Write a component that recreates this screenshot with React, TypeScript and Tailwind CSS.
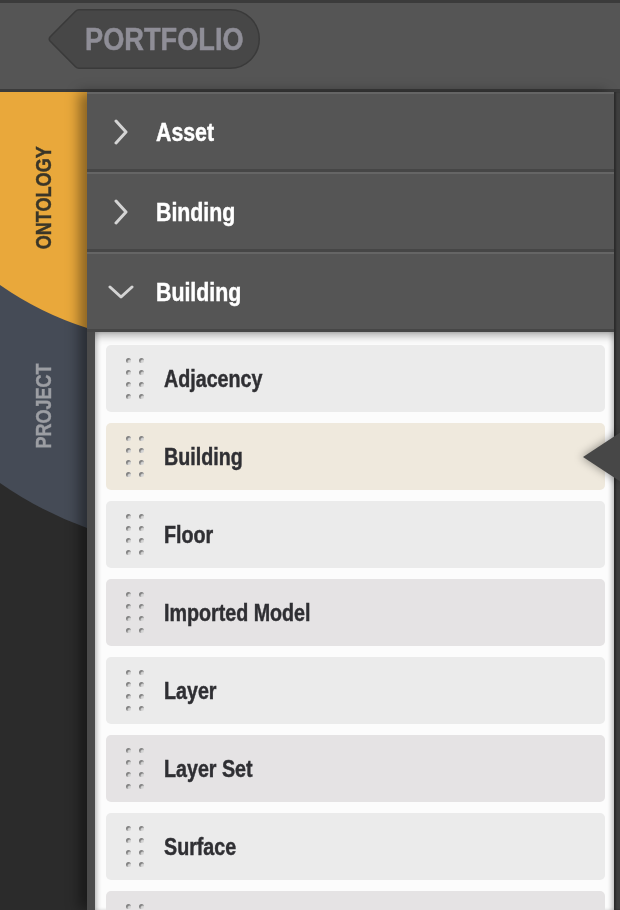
import React from 'react'

const sans = "font-['Liberation_Sans',Arial,sans-serif]"
// condensed look: Arial metrics squeezed to roughly Arial Narrow widths
const squeeze = 'inline-block origin-left scale-x-[0.82] [-webkit-text-stroke:0.45px_currentColor]'

const sections = [
    { name: 'Asset', open: false },
    { name: 'Binding', open: false },
    { name: 'Building', open: true },
]

const items = ['Adjacency', 'Building', 'Floor', 'Imported Model', 'Layer', 'Layer Set', 'Surface', '']

function Chevron({ open }: { open: boolean }) {
    if (open) {
        return (
            <svg width="26" height="14" viewBox="0 0 26 14" fill="none">
                <polyline points="2,2 13,12 24,2" stroke="#d4d4d4" strokeWidth="3" strokeLinecap="round" strokeLinejoin="round" />
            </svg>
        )
    }
    return (
        <svg width="14" height="26" viewBox="0 0 14 26" fill="none">
            <polyline points="2,2 12,13 2,24" stroke="#d4d4d4" strokeWidth="3" strokeLinecap="round" strokeLinejoin="round" />
        </svg>
    )
}

function Grip() {
    return (
        <div className="grid grid-cols-2 gap-x-[8px] gap-y-[6.7px] w-[18px] shrink-0">
            {Array.from({ length: 8 }).map((_, i) => (
                <div
                    key={i}
                    className="w-[5px] h-[5px] rounded-full bg-[#d6d6d6] shadow-[inset_1.5px_1.5px_1px_rgba(0,0,0,0.4)]"
                />
            ))}
        </div>
    )
}

export default function App() {
    return (
        <div className={`w-[620px] h-[910px] overflow-hidden flex flex-col bg-[#2b2b2b] ${sans}`}>
            {/* Top bar */}
            <div className="h-[92px] shrink-0 bg-[#555555] border-t-[3px] border-b-[3px] border-[#3b3b3b] pl-[48px] pt-[6px]">
                <div className="relative w-[212px] h-[60px] flex items-center pl-[37px]">
                    <svg className="absolute inset-0" width="212" height="60" viewBox="0 0 212 60">
                        <path
                            d="M31 0.75 H182 A29.25 29.25 0 0 1 182 59.25 H31 Q29 59.25 27.5 57.8 L2 32 Q0.5 30 2 28 L27.5 2.2 Q29 0.75 31 0.75 Z"
                            fill="#474747"
                            stroke="#3a3a3a"
                            strokeWidth="1.5"
                        />
                    </svg>
                    <span className="relative inline-block origin-left scale-x-[0.85] [-webkit-text-stroke:0.5px_currentColor] text-[32px] leading-none font-bold text-[#8f8e97]">
                        PORTFOLIO
                    </span>
                </div>
            </div>

            <div className="flex flex-1 min-h-0">
                {/* Side tabs */}
                <div className="w-[87px] shrink-0 flex flex-col">
                    <div className="h-[193px] bg-[#e9a83b] flex justify-center pt-[43px]">
                        <span className="[writing-mode:vertical-rl] rotate-180 scale-y-[0.82] [-webkit-text-stroke:0.4px_currentColor] text-[22px] leading-none font-bold text-[#3a3628] h-fit">
                            ONTOLOGY
                        </span>
                    </div>
                    <svg width="87" height="45" viewBox="0 0 87 45" className="block shrink-0">
                        <rect width="87" height="45" fill="#454b56" />
                        <path d="M0 0 Q40 28 87 43 V0 Z" fill="#e9a83b" />
                    </svg>
                    <div className="h-[153px] bg-[#454b56] flex justify-center pt-[24px]">
                        <span className="[writing-mode:vertical-rl] rotate-180 scale-y-[0.82] [-webkit-text-stroke:0.4px_currentColor] text-[22px] leading-none font-bold text-[#9c9ea3] h-fit">
                            PROJECT
                        </span>
                    </div>
                    <svg width="87" height="45" viewBox="0 0 87 45" className="block shrink-0">
                        <rect width="87" height="45" fill="#2b2b2b" />
                        <path d="M0 0 Q40 28 87 45 V0 Z" fill="#454b56" />
                    </svg>
                    <div className="flex-1 bg-[#2b2b2b]" />
                </div>

                {/* Accordion */}
                <div className="relative z-10 flex-1 flex flex-col shadow-[-8px_0_12px_rgba(0,0,0,0.4)]">
                    {sections.map((s) => (
                        <div
                            key={s.name}
                            className="h-[80px] shrink-0 flex items-center bg-[#555555] border-t-2 border-[#656565] border-b-[3px] border-b-[#464646] pl-[21px]"
                        >
                            <div className="w-[26px] flex justify-center">
                                <Chevron open={s.open} />
                            </div>
                            <span className={`ml-[22px] text-[26px] font-bold text-white leading-none ${squeeze}`}>{s.name}</span>
                        </div>
                    ))}

                    <div className="flex flex-1 min-h-0">
                        <div className="w-[8px] bg-[#4b4b4b]" />
                        <div className="flex-1 bg-[#fcfcfc] shadow-[inset_0_7px_8px_-3px_rgba(0,0,0,0.3),inset_4px_0_5px_-2px_rgba(0,0,0,0.2),inset_-4px_0_5px_-2px_rgba(0,0,0,0.2)] pt-[13px] pl-[11px] pr-[9px] flex flex-col gap-[11px]">
                            {items.map((item, i) => {
                                const selected = item === 'Building'
                                const bg = selected ? 'bg-[#efe9dd]' : i % 2 === 1 ? 'bg-[#e5e3e4]' : 'bg-[#ebebeb]'
                                return (
                                    <div
                                        key={i}
                                        className={`relative h-[67px] shrink-0 rounded-[5px] flex items-center pl-[20px] ${bg}`}
                                    >
                                        <Grip />
                                        {item && (
                                            <span className={`ml-[20px] text-[24px] font-bold text-[#2f2f33] leading-none ${squeeze}`}>{item}</span>
                                        )}
                                        {selected && (
                                            <svg
                                                className="absolute right-[-16px] top-[9px] drop-shadow-[-2px_0_4px_rgba(0,0,0,0.35)]"
                                                width="38"
                                                height="50"
                                                viewBox="0 0 38 50"
                                            >
                                                <polygon points="0,25 38,0 38,50" fill="#474747" />
                                            </svg>
                                        )}
                                    </div>
                                )
                            })}
                        </div>
                    </div>
                </div>

                <div className="w-[6px] shrink-0 bg-[#3f3f3f] shadow-[inset_2px_0_2px_rgba(0,0,0,0.3)]" />
            </div>
        </div>
    )
}
